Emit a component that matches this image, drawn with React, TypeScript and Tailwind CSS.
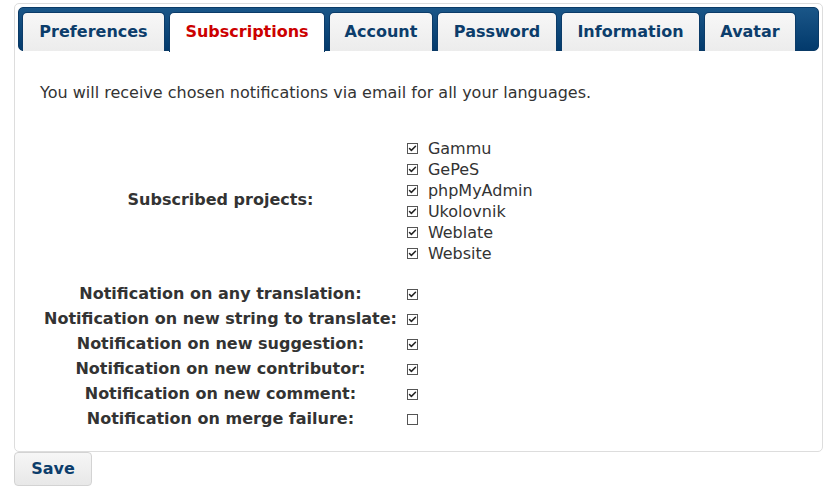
import { Check } from "lucide-react"

const tabs = [
  { name: "Preferences", width: "w-[143px]" },
  { name: "Subscriptions", width: "w-[156px]" },
  { name: "Account", width: "w-[104px]" },
  { name: "Password", width: "w-[120px]" },
  { name: "Information", width: "w-[139px]" },
  { name: "Avatar", width: "w-[92px]" },
]

const projects = ["Gammu", "GePeS", "phpMyAdmin", "Ukolovnik", "Weblate", "Website"]

const notifications = [
  { label: "Notification on any translation:", checked: true },
  { label: "Notification on new string to translate:", checked: true },
  { label: "Notification on new suggestion:", checked: true },
  { label: "Notification on new contributor:", checked: true },
  { label: "Notification on new comment:", checked: true },
  { label: "Notification on merge failure:", checked: false },
]

const Box = ({ checked }: { checked: boolean }) => (
  <span className="inline-flex w-[11px] h-[11px] border border-[#555] bg-white items-center justify-center align-middle">
    {checked && <Check className="w-[9px] h-[9px] text-[#222]" strokeWidth={4} />}
  </span>
)

const App = () => {
  return (
    <div className="w-[830px] h-[494px] bg-white text-[#333] font-['DejaVu_Sans',sans-serif] overflow-hidden">
      <div className="ml-[14px] mt-[3px] w-[809px] border border-[#ddd] rounded-[5px] p-[3px]">
        <div className="flex gap-[4px] pl-[3px] pt-[4px] h-[44px] rounded-[5px] border border-[#0a3a66] bg-gradient-to-b from-[#1a5688] to-[#033a6c]">
          {tabs.map((tab) => {
            const active = tab.name === "Subscriptions"
            return (
              <div
                key={tab.name}
                className={`${tab.width} shrink-0 pt-[8px] text-center rounded-t-[5px] border border-b-0 border-[#0b3b68] text-[16px] leading-[21px] font-bold ${
                  active
                    ? "bg-white text-[#cc0000] h-[40px]"
                    : "bg-gradient-to-b from-[#f7f7f7] to-[#ececec] text-[#0c3d6b] h-[39px]"
                }`}>
                {tab.name}
              </div>
            )
          })}
        </div>
        <div className="px-[22px] pt-[31px] pb-[17px] text-[16px] leading-[21px]">
          <p className="mb-[35px]">
            You will receive chosen notifications via email for all your languages.
          </p>
          <table className="border-collapse">
            <tbody>
              <tr>
                <th className="pl-[4px] pr-[4px] pb-[21px] text-center font-bold">Subscribed projects:</th>
                <td className="pl-[6px] pr-[4px] pb-[17px]">
                  {projects.map((p) => (
                    <div key={p} className="flex items-center gap-[10px] h-[21px]">
                      <Box checked />
                      <span>{p}</span>
                    </div>
                  ))}
                </td>
              </tr>
              {notifications.map((n) => (
                <tr key={n.label} className="h-[25px]">
                  <th className="px-[4px] text-center font-bold whitespace-nowrap">{n.label}</th>
                  <td className="pl-[6px] pr-[4px]">
                    <Box checked={n.checked} />
                  </td>
                </tr>
              ))}
            </tbody>
          </table>
        </div>
      </div>
      <button className="ml-[14px] w-[78px] h-[34px] rounded-[4px] border border-[#d3d3d3] bg-gradient-to-b from-[#f6f6f6] to-[#e8e8e8] text-[16px] font-bold text-[#0c3d6b]">
        Save
      </button>
    </div>
  )
}

export default App
